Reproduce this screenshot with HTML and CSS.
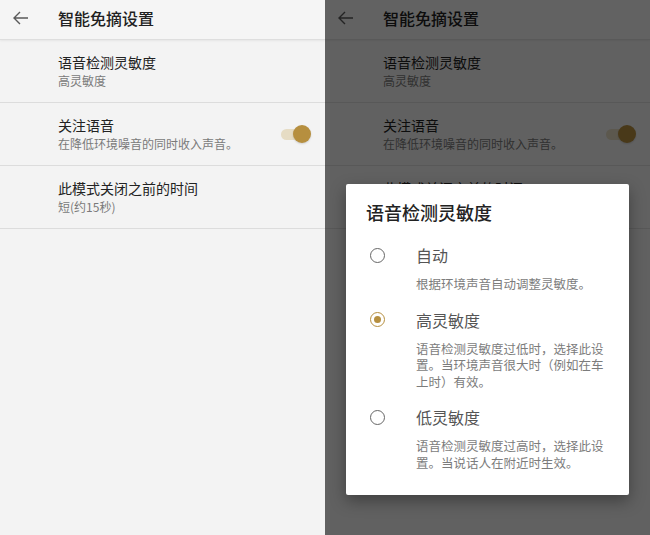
FILE: index.html
```html
<!DOCTYPE html>
<html lang="zh-CN">
<head>
<meta charset="utf-8">
<title>智能免摘设置</title>
<link rel="stylesheet" href="styles.css">
</head>
<body>
<div class="stage">
  <section class="screen">
    <header class="appbar">
      <svg class="back" viewBox="0 0 16 14" width="16" height="14"><path d="M15 7H1.5M7 1L1 7l6 6" fill="none" stroke="#5a5a5a" stroke-width="1.4"/></svg>
      <h1 class="appbar-title">智能免摘设置</h1>
    </header>
    <div class="row">
      <div class="row-text">
        <div class="row-title">语音检测灵敏度</div>
        <div class="row-sub">高灵敏度</div>
      </div>
    </div>
    <div class="row">
      <div class="row-text">
        <div class="row-title">关注语音</div>
        <div class="row-sub">在降低环境噪音的同时收入声音。</div>
      </div>
      <div class="switch"><span class="track"></span><span class="thumb"></span></div>
    </div>
    <div class="row">
      <div class="row-text">
        <div class="row-title">此模式关闭之前的时间</div>
        <div class="row-sub">短(约15秒)</div>
      </div>
    </div>
  </section>

  <section class="screen dimmed">
    <header class="appbar">
      <svg class="back" viewBox="0 0 16 14" width="16" height="14"><path d="M15 7H1.5M7 1L1 7l6 6" fill="none" stroke="#5a5a5a" stroke-width="1.4"/></svg>
      <h1 class="appbar-title">智能免摘设置</h1>
    </header>
    <div class="row">
      <div class="row-text">
        <div class="row-title">语音检测灵敏度</div>
        <div class="row-sub">高灵敏度</div>
      </div>
    </div>
    <div class="row">
      <div class="row-text">
        <div class="row-title">关注语音</div>
        <div class="row-sub">在降低环境噪音的同时收入声音。</div>
      </div>
      <div class="switch"><span class="track"></span><span class="thumb"></span></div>
    </div>
    <div class="row">
      <div class="row-text">
        <div class="row-title">此模式关闭之前的时间</div>
        <div class="row-sub">短(约15秒)</div>
      </div>
    </div>
    <div class="scrim"></div>
    <div class="dialog">
      <h2 class="dialog-title">语音检测灵敏度</h2>
      <div class="option">
        <span class="radio"></span>
        <div class="opt-label">自动</div>
        <div class="opt-desc">根据环境声音自动调整灵敏度。</div>
      </div>
      <div class="option">
        <span class="radio checked"></span>
        <div class="opt-label">高灵敏度</div>
        <div class="opt-desc">语音检测灵敏度过低时，选择此设置。当环境声音很大时（例如在车上时）有效。</div>
      </div>
      <div class="option">
        <span class="radio"></span>
        <div class="opt-label">低灵敏度</div>
        <div class="opt-desc">语音检测灵敏度过高时，选择此设置。当说话人在附近时生效。</div>
      </div>
    </div>
  </section>
</div>
</body>
</html>
```

FILE: styles.css
```css
* { box-sizing: border-box; margin: 0; padding: 0; }
html, body { width: 650px; height: 535px; overflow: hidden; }
body {
  font-family: "Noto Sans CJK SC", "Noto Sans", Roboto, sans-serif;
  background: #f3f3f3;
}
.stage { display: flex; width: 650px; height: 535px; }
.screen {
  position: relative;
  width: 325px;
  height: 535px;
  background: #f3f3f3;
  overflow: hidden;
}
.appbar {
  height: 40px;
  display: flex;
  align-items: center;
  padding-bottom: 4px;
  border-bottom: 1px solid #dedede;
  box-shadow: 0 1px 2px rgba(0,0,0,0.06);
  background: #f5f5f5;
}
.back { margin-left: 13px; margin-right: 29px; flex: none; }
.appbar-title {
  font-size: 16px;
  font-weight: 500;
  color: #212121;
  line-height: 20px;
}
.row {
  height: 63px;
  display: flex;
  align-items: center;
  padding-left: 58px;
  padding-right: 14px;
  border-bottom: 1px solid #dcdcdc;
}
.row-text { flex: 1; }
.row-title { font-size: 14px; line-height: 19px; color: #222; }
.row-sub { font-size: 12px; line-height: 17px; color: #7a7a7a; }
.switch { position: relative; width: 30px; height: 18px; }
.track {
  position: absolute; left: 0; top: 4px;
  width: 26px; height: 11px; border-radius: 6px;
  background: #e6dcc4;
}
.thumb {
  position: absolute; right: 0; top: 0;
  width: 18px; height: 18px; border-radius: 50%;
  background: #b68f3f;
  box-shadow: 0 1px 2px rgba(0,0,0,0.15);
}
.scrim {
  position: absolute; inset: 0;
  background: rgba(0,0,0,0.6);
}
.dialog {
  position: absolute;
  left: 21px; top: 184px;
  width: 283px;
  background: #fff;
  border-radius: 2px;
  box-shadow: 0 6px 16px rgba(0,0,0,0.35);
  padding: 16px 22px 24px 20px;
}
.dialog-title {
  font-size: 18px;
  font-weight: 500;
  line-height: 24px;
  color: #222;
  margin-bottom: 20px;
}
.option {
  display: grid;
  grid-template-columns: 50px 1fr;
  margin-bottom: 16px;
}
.option:last-child { margin-bottom: 0; }
.radio {
  grid-row: 1; grid-column: 1;
  align-self: center;
  margin-left: 4px;
  width: 15px; height: 15px;
  border-radius: 50%;
  border: 1.8px solid #666;
  display: flex; align-items: center; justify-content: center;
}
.radio.checked { border-color: #b68f3f; }
.radio.checked::after {
  content: "";
  width: 7px; height: 7px; border-radius: 50%;
  background: #b68f3f;
}
.opt-label {
  grid-row: 1; grid-column: 2;
  font-size: 16px; line-height: 22px; color: #555;
}
.opt-desc {
  grid-row: 2; grid-column: 2;
  margin-top: 10px;
  font-size: 12.5px; line-height: 16.5px; color: #7c7c7c;
}
```
